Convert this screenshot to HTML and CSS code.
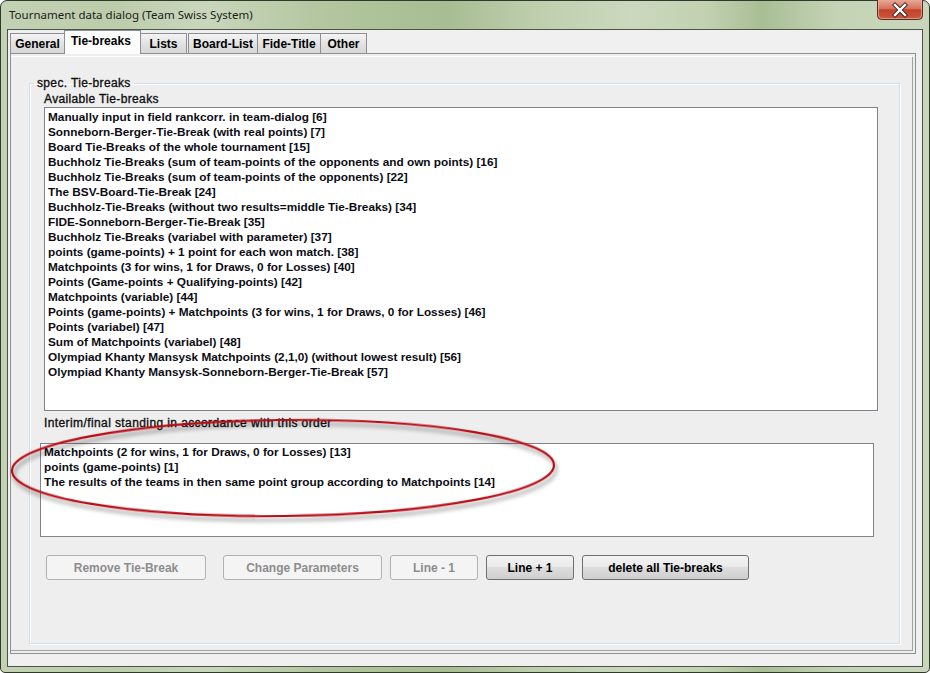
FILE: index.html
```html
<!DOCTYPE html>
<html>
<head>
<meta charset="utf-8">
<link rel="stylesheet" href="styles.css">
</head>
<body>
<div class="window">
  <div class="titlebar">
    <span class="title">Tournament data dialog (Team Swiss System)</span>
    <div class="close">
      <svg width="46" height="20" viewBox="0 0 46 20">
        <defs>
          <linearGradient id="cg" x1="0" y1="0" x2="0" y2="1">
            <stop offset="0" stop-color="#e8a894"/>
            <stop offset="0.45" stop-color="#d4715a"/>
            <stop offset="0.5" stop-color="#c4422a"/>
            <stop offset="1" stop-color="#c85a3e"/>
          </linearGradient>
        </defs>
        <path d="M0.5 0 V15.5 Q0.5 19.5 4.5 19.5 H41.5 Q45.5 19.5 45.5 15.5 V0" fill="url(#cg)" stroke="#5a2a22" stroke-width="1"/>
        <path d="M1.5 0 V15 Q1.5 18.5 5 18.5 H41 Q44.5 18.5 44.5 15 V0" fill="none" stroke="#f0c2b4" stroke-opacity="0.6" stroke-width="1"/>
        <path d="M18 5 L28 15 M28 5 L18 15" stroke="#3b2020" stroke-width="4.2" stroke-linecap="square"/>
        <path d="M18 5 L28 15 M28 5 L18 15" stroke="#ffffff" stroke-width="2.4" stroke-linecap="square"/>
      </svg>
    </div>
  </div>
  <div class="client">
    <div class="tabs">
      <div class="tab first">General</div>
      <div class="tab active">Tie-breaks</div>
      <div class="tab gap">Lists</div>
      <div class="tab">Board-List</div>
      <div class="tab">Fide-Title</div>
      <div class="tab">Other</div>
    </div>
    <div class="panel">
      <fieldset class="group">
        <legend>spec. Tie-breaks</legend>
        <div class="label">Available Tie-breaks</div>
        <div class="list list-available">
          <div>Manually input in field rankcorr. in team-dialog [6]</div>
          <div>Sonneborn-Berger-Tie-Break (with real points) [7]</div>
          <div>Board Tie-Breaks of the whole tournament [15]</div>
          <div>Buchholz Tie-Breaks (sum of team-points of the opponents and own points) [16]</div>
          <div>Buchholz Tie-Breaks (sum of team-points of the opponents) [22]</div>
          <div>The BSV-Board-Tie-Break [24]</div>
          <div>Buchholz-Tie-Breaks (without two results=middle Tie-Breaks) [34]</div>
          <div>FIDE-Sonneborn-Berger-Tie-Break [35]</div>
          <div>Buchholz Tie-Breaks (variabel with parameter) [37]</div>
          <div>points (game-points) + 1 point for each won match. [38]</div>
          <div>Matchpoints (3 for wins, 1 for Draws, 0 for Losses) [40]</div>
          <div>Points (Game-points + Qualifying-points) [42]</div>
          <div>Matchpoints (variable) [44]</div>
          <div>Points (game-points) + Matchpoints (3 for wins, 1 for Draws, 0 for Losses) [46]</div>
          <div>Points (variabel) [47]</div>
          <div>Sum of Matchpoints (variabel) [48]</div>
          <div>Olympiad Khanty Mansysk Matchpoints (2,1,0) (without lowest result) [56]</div>
          <div>Olympiad Khanty Mansysk-Sonneborn-Berger-Tie-Break [57]</div>
        </div>
        <div class="label label-order">Interim/final standing in accordance with this order</div>
        <div class="list list-order">
          <div>Matchpoints (2 for wins, 1 for Draws, 0 for Losses) [13]</div>
          <div>points (game-points) [1]</div>
          <div>The results of the teams in then same point group according to Matchpoints [14]</div>
        </div>
        <div class="buttons">
          <button class="btn disabled w160">Remove Tie-Break</button>
          <button class="btn disabled w159 gap18">Change Parameters</button>
          <button class="btn disabled w88">Line - 1</button>
          <button class="btn w88">Line + 1</button>
          <button class="btn w167">delete all Tie-breaks</button>
        </div>
      </fieldset>
    </div>
  </div>
  <svg class="markup" width="930" height="673" viewBox="0 0 930 673">
    <defs>
      <filter id="sh" x="-10%" y="-30%" width="120%" height="160%">
        <feDropShadow dx="2" dy="4" stdDeviation="2.2" flood-color="#000" flood-opacity="0.45"/>
      </filter>
    </defs>
    <ellipse cx="283" cy="468" rx="271" ry="48" transform="rotate(-0.6 283 468)" fill="none" stroke="#b80c16" stroke-width="2.2" filter="url(#sh)"/>
  </svg>
</div>
</body>
</html>
```
FILE: styles.css
```css
html, body {
  margin: 0;
  padding: 0;
  background: #ffffff;
}

.window {
  position: relative;
  box-sizing: border-box;
  width: 930px;
  height: 673px;
  border: 1px solid #2e3a2a;
  border-radius: 7px 7px 5px 5px;
  background: linear-gradient(90deg, #c3d1b4 0%, #bccdab 12%, #c9d6bb 22%, #b3c69f 35%, #a8bd93 48%, #bfcfae 58%, #cbd8be 68%, #c2d1b1 76%, #a9be95 82%, #c4d3b5 90%, #c9d6bc 100%);
  padding: 0 6px 5px 6px;
  display: flex;
  flex-direction: column;
  font-family: "Liberation Sans", Arial, sans-serif;
}

.titlebar {
  height: 28px;
  display: flex;
  align-items: flex-start;
  flex-shrink: 0;
}

.title {
  font-family: "Noto Sans", "DejaVu Sans", sans-serif;
  font-size: 11.5px;
  line-height: 16px;
  color: #1c1c1c;
  padding: 6px 0 0 2px;
}

.close {
  margin-left: auto;
  margin-top: -1px;
  margin-right: 0;
  width: 46px;
  height: 20px;
}

.close svg {
  display: block;
}

.client {
  flex: 1;
  border: 1px solid #4a5548;
  background: #f0f0f0;
  display: flex;
  flex-direction: column;
}

.tabs {
  display: flex;
  align-items: flex-end;
  height: 23px;
  padding-left: 2px;
  position: relative;
  z-index: 1;
}

.tab {
  box-sizing: border-box;
  height: 20px;
  border: 1px solid #8c8e94;
  border-bottom: none;
  margin-left: -1px;
  background: linear-gradient(#f4f4f4, #e0e0e0 60%, #d8d8d8);
  font-size: 12px;
  font-weight: bold;
  line-height: 19px;
  color: #000;
  padding: 1px 5px 0 5px;
  white-space: nowrap;
}

.tab.first {
  margin-left: 0;
  width: 55px;
}

.tab.active {
  height: 24px;
  margin-bottom: -1px;
  background: #fcfcfc;
  padding: 1px 6px 0 6px;
  width: 77px;
}

.tab.gap {
  width: 47px;
  margin-right: 2px;
}

.tab:nth-child(4) { width: 70px; }
.tab:nth-child(5) { width: 64px; }
.tab:nth-child(6) { width: 47px; }

.tab.first, .tab:nth-child(3), .tab:nth-child(4), .tab:nth-child(5), .tab:nth-child(6) {
  text-align: center;
  padding-left: 0;
  padding-right: 0;
}

.panel {
  box-sizing: border-box;
  margin-left: 2px;
  width: 906px;
  height: 601px;
  border: 1px solid #8e9094;
  background: #eeeeee;
  box-shadow: inset 0 2px 0 #eeeeee, inset 0 3px 0 #ffffff, inset -2px -2px 0 #eeeeee, inset -3px -3px 0 #a2a2a2;
  padding-top: 22px;
}

.group {
  box-sizing: border-box;
  margin: 0 15px 0 18px;
  height: 568px;
  border: 1px solid #d3dee8;
  box-shadow: 1px 1px 0 #ffffff, inset 1px 1px 0 #ffffff;
  padding: 2px 0 0 14px;
  min-width: 0;
}

.group legend {
  font-size: 12px;
  line-height: 14px;
  font-weight: normal;
  color: #101010;
  margin-left: -10px;
  padding: 0 3px;
  letter-spacing: 0.35px;
  -webkit-text-stroke: 0.35px #101010;
}

.label {
  font-size: 12px;
  line-height: 15px;
  height: 15px;
  color: #101010;
  letter-spacing: 0.35px;
  -webkit-text-stroke: 0.35px #101010;
}

.list {
  box-sizing: border-box;
  width: 834px;
  border: 1px solid #80828a;
  background: #ffffff;
  font-size: 11.8px;
  font-weight: bold;
  line-height: 15px;
  color: #0c0c14;
  padding-left: 3px;
  white-space: nowrap;
}

.list-available {
  height: 304px;
  padding-top: 2px;
}

.label-order {
  margin-top: 5px;
  letter-spacing: 0.4px;
}

.list-order {
  margin-top: 12px;
  margin-left: -4px;
  height: 94px;
  padding-top: 1px;
}

.buttons {
  display: flex;
  margin-top: 18px;
  margin-left: 2px;
  gap: 8px;
}

.btn {
  box-sizing: border-box;
  height: 25px;
  border: 1px solid #707070;
  border-radius: 3px;
  background: linear-gradient(#f2f2f2 0%, #ebebeb 45%, #dddddd 50%, #cfcfcf 100%);
  font-family: "Liberation Sans", Arial, sans-serif;
  font-size: 12px;
  font-weight: bold;
  color: #000;
  padding: 0;
  margin: 0;
  text-align: center;
}

.btn.disabled {
  border-color: #adb2b5;
  background: #f4f4f4;
  color: #8d8d8d;
}

.w160 { width: 160px; }
.w159 { width: 159px; }
.w88 { width: 88px; }
.w167 { width: 167px; }
.gap18 { margin-left: 9px; }

.markup {
  position: absolute;
  left: -1px;
  top: -1px;
  pointer-events: none;
}
```
